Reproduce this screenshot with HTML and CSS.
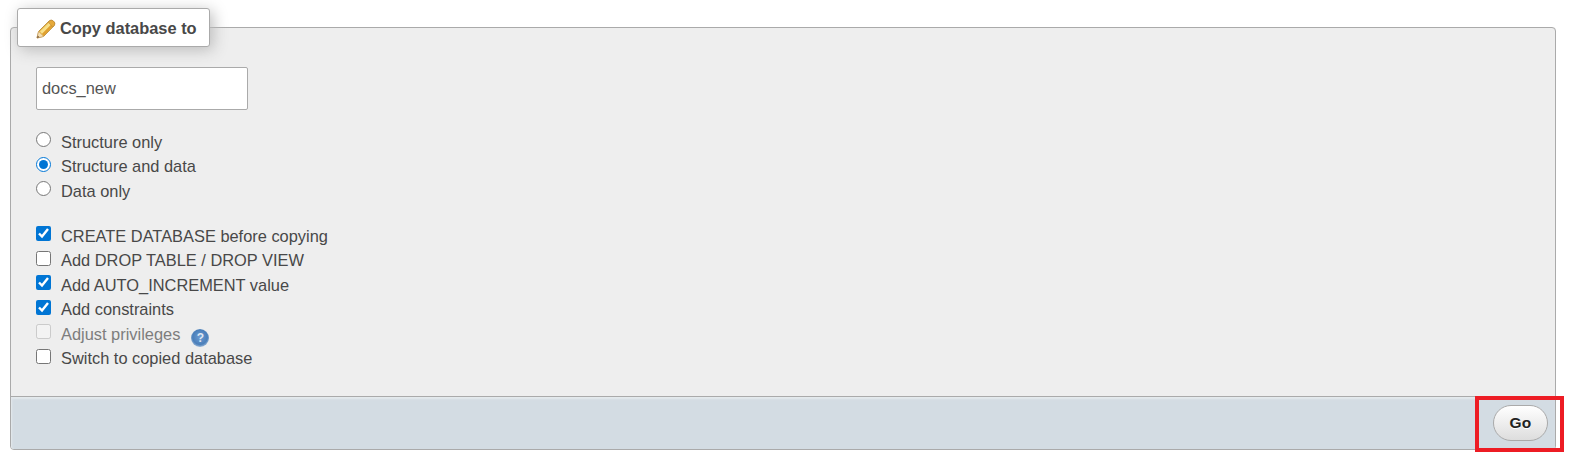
FILE: index.html
```html
<!DOCTYPE html>
<html lang="en">
<head>
<meta charset="utf-8">
<title>Copy database to</title>
<link rel="stylesheet" href="styles.css">
</head>
<body>
<form class="page">
  <fieldset class="panel">
    <legend class="panel-title">
      <svg class="pencil" viewBox="0 0 20 20" aria-hidden="true">
        <path d="M1 19 L2.6 12.4 L13.2 1.9 Q15 .6 16.8 1.6 L18.4 3.2 Q19.4 5 18 6.8 L7.6 17.4 Z" fill="#e9b949" stroke="#b98a3a" stroke-width=".9" stroke-linejoin="round"/>
        <path d="M4 12.6 L14.4 2.4 L16.6 4.2 L6.2 14.8 Z" fill="#f8e08a"/>
        <path d="M6.2 14.8 L16.6 4.2 L18 6 L7.6 17 Z" fill="#e0a030"/>
        <path d="M13.4 1.9 Q15 .6 16.8 1.6 L18.4 3.2 Q19.4 5 18 6.8 L16.8 8 L12.2 3.2 Z" fill="#e6a93a" stroke="#b98a3a" stroke-width=".6"/>
        <path d="M1 19 L2.6 12.4 L7.6 17.4 Z" fill="#f5dfb4" stroke="#c9a368" stroke-width=".6" stroke-linejoin="round"/>
        <path d="M1 19 L1.7 16.4 L3.6 18.3 Z" fill="#7a5b3a"/>
      </svg>
      <span>Copy database to</span>
    </legend>
    <div class="panel-body">
      <input class="name-input" type="text" value="docs_new">
      <div class="options">
        <label class="option"><input type="radio" name="what"><span>Structure only</span></label>
        <label class="option"><input type="radio" name="what" checked><span>Structure and data</span></label>
        <label class="option"><input type="radio" name="what"><span>Data only</span></label>
      </div>
      <div class="options">
        <label class="option"><input type="checkbox" checked><span>CREATE DATABASE before copying</span></label>
        <label class="option"><input type="checkbox"><span>Add DROP TABLE / DROP VIEW</span></label>
        <label class="option"><input type="checkbox" checked><span>Add AUTO_INCREMENT value</span></label>
        <label class="option"><input type="checkbox" checked><span>Add constraints</span></label>
        <label class="option is-disabled"><input type="checkbox" disabled><span>Adjust privileges</span><span class="help">?</span></label>
        <label class="option"><input type="checkbox"><span>Switch to copied database</span></label>
      </div>
    </div>
    <div class="panel-footer">
      <button class="go" type="button">Go</button>
    </div>
  </fieldset>
  <div class="highlight"></div>
</form>
</body>
</html>
```
FILE: styles.css
```css
* { box-sizing: border-box; }
html, body { margin: 0; background: #fff; }
body {
  height: 460px;
  overflow: hidden;
  padding: 8px 18px 0 10px;
  font-family: "Liberation Sans", Arial, sans-serif;
  font-size: 16.4px;
  color: #484848;
}
.page { display: block; }
.panel {
  margin: 0;
  padding: 0;
  min-width: 0;
  height: 442px;
  background: #eee;
  border: 1px solid #aaa;
  border-radius: 4px;
  display: flex;
  flex-direction: column;
}
.panel-title {
  display: flex;
  align-items: center;
  justify-content: flex-start;
  margin-left: 6px;
  padding: 2px 12px 0 18px;
  width: 193px;
  height: 39px;
  background: #fff;
  border: 1px solid #aaa;
  border-radius: 3px;
  box-shadow: 3px 3px 15px #bbb;
  font-weight: bold;
  white-space: nowrap;
}
.pencil { width: 20px; height: 20px; margin-right: 4px; flex: none; }
.panel-body {
  flex: 1;
  padding: 20px 25px 0;
}
.name-input {
  display: block;
  width: 212px;
  height: 43px;
  padding: 0 5px;
  background: #fff;
  border: 1px solid #aaa;
  border-radius: 2px;
  font: 16.4px "Liberation Sans", Arial, sans-serif;
  color: #555;
}
.options { margin-top: 20px; display: flex; flex-direction: column; }
.options + .options { margin-top: 20.25px; }
.option {
  display: flex;
  align-items: center;
  height: 24.5px;
  white-space: nowrap;
}
.option input {
  width: 15px;
  height: 15px;
  margin: 0 10px 5px 0;
  flex: none;
  accent-color: #0075d4;
}
.is-disabled { color: #7d7d7d; }
.help {
  width: 18px;
  height: 18px;
  margin: 7px 0 0 11px;
  border-radius: 50%;
  background: radial-gradient(circle at 50% 45%, #6f9cd2 0, #4a7fba 55%, #8fb0d4 72%, #c9d8e8 100%);
  color: #dfe8f3;
  font-size: 12px;
  font-weight: bold;
  line-height: 18px;
  text-align: center;
}
.panel-footer {
  display: flex;
  justify-content: flex-end;
  align-items: center;
  height: 53px;
  padding-right: 7px;
  background: #d3dce3;
  border-top: 1px solid #aaa;
  border-radius: 0 0 3px 3px;
  box-shadow: inset 1px 2px 2px #e4e9ed;
}
.go {
  width: 55px;
  height: 36px;
  padding: 0;
  border: 1px solid #aaa;
  border-radius: 18px;
  background: linear-gradient(#fff, #ddd);
  color: #222;
  font: bold 15.5px "Liberation Sans", Arial, sans-serif;
  letter-spacing: .3px;
  text-shadow: 0 1px 0 #fff;
}
.highlight {
  position: absolute;
  left: 1475px;
  top: 396px;
  width: 89px;
  height: 56px;
  border: 4px solid #ed1c24;
}
```
